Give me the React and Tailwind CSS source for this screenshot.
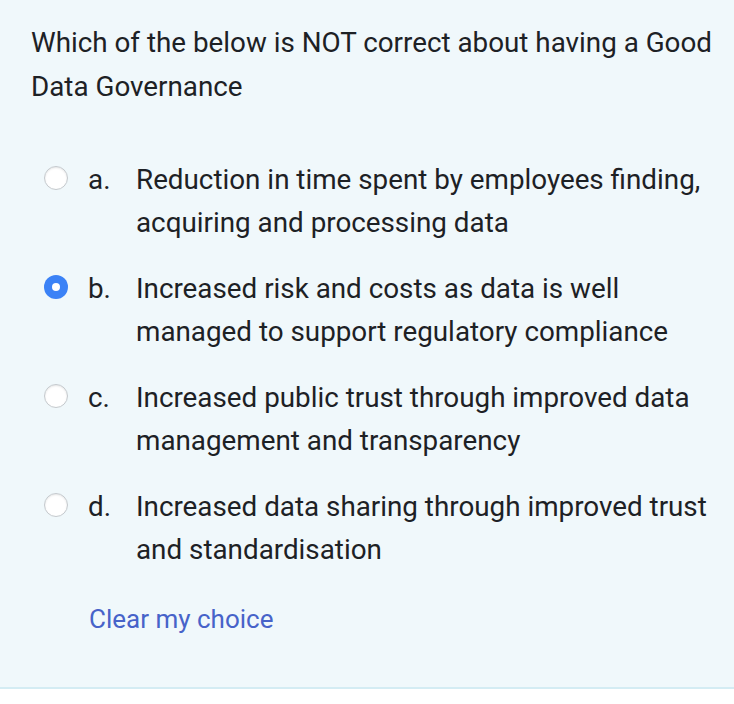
import { useState } from "react";

const options = [
  { key: "a", text: "Reduction in time spent by employees finding, acquiring and processing data" },
  { key: "b", text: "Increased risk and costs as data is well managed to support regulatory compliance" },
  { key: "c", text: "Increased public trust through improved data management and transparency" },
  { key: "d", text: "Increased data sharing through improved trust and standardisation" },
];

function Radio({ checked }) {
  if (checked) {
    return (
      <span className="flex h-6 w-6 items-center justify-center rounded-full bg-[#3b82f6]">
        <span className="h-2 w-2 rounded-full bg-white" />
      </span>
    );
  }
  return <span className="block h-6 w-6 rounded-full border border-[#c4c9cd] bg-white shadow-[inset_0_1px_2px_rgba(0,0,0,0.1)]" />;
}

export default function App() {
  const [choice, setChoice] = useState("b");

  return (
    <div className="min-h-[704px] bg-white font-['Roboto',sans-serif] text-[#1d2125]">
      <div className="border-b-2 border-[#d4ecf3] bg-[#f0f8fb] pl-[31px] pr-[10px] pt-[21px] pb-[46px]">
        <p className="text-[27.8px] leading-[44px]">
          Which of the below is NOT correct about having a Good Data Governance
        </p>

        <div className="mt-[49px] flex flex-col gap-[23px]">
          {options.map((o) => (
            <label key={o.key} className="flex cursor-pointer items-start" onClick={() => setChoice(o.key)}>
              <span className="mt-[8px] ml-[13px] shrink-0">
                <Radio checked={choice === o.key} />
              </span>
              <span className="ml-[20px] w-[48px] shrink-0 text-[27.8px] leading-[43px]">{o.key}.</span>
              <span className="text-[27.8px] leading-[43px]">{o.text}</span>
            </label>
          ))}
        </div>

        <button onClick={() => setChoice(null)} className="mt-[27px] ml-[58px] text-[26px] leading-[43px] text-[#4763c9]">
          Clear my choice
        </button>
      </div>
    </div>
  );
}
